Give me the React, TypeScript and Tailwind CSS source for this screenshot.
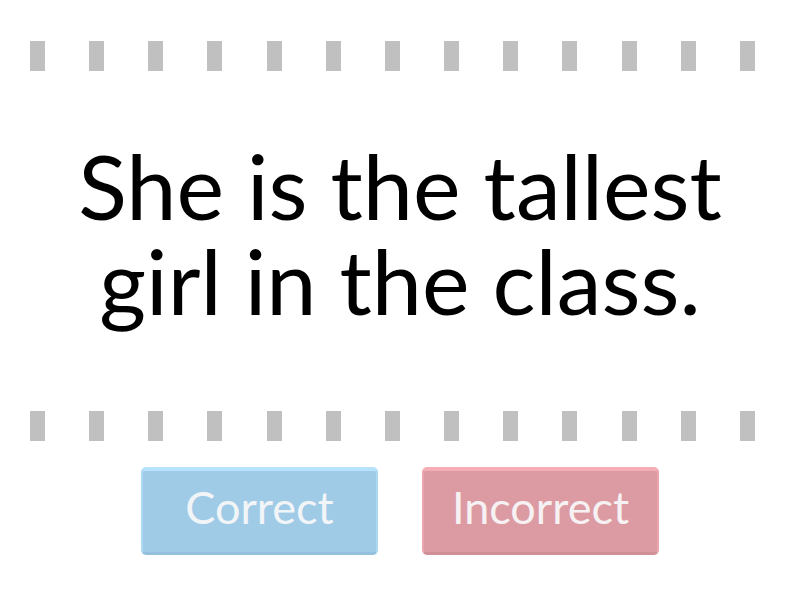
const ticks = Array.from({ length: 13 });

function TickRow() {
  return (
    <div className="ml-[30px] flex w-[725px] justify-between">
      {ticks.map((_, i) => (
        <div key={i} className="h-[30px] w-[15px] bg-[#c0c0c0]" />
      ))}
    </div>
  );
}

export default function App() {
  return (
    <div
      className="h-[600px] w-[800px] bg-white"
      style={{ fontFamily: "Lato, 'Open Sans', sans-serif" }}
    >
      <div className="pt-[41px]">
        <TickRow />
      </div>

      {/* sentence */}
      <div className="flex h-[340px] items-center justify-center pb-[16px] text-center">
        <p className="text-[90px] leading-[95px] text-black">
          She is the tallest
          <br />
          girl in the class.
        </p>
      </div>

      <TickRow />

      {/* answers */}
      <div className="mt-[26px] flex gap-[44px] pl-[141px]">
        <button className="flex h-[88px] w-[237px] items-center justify-center rounded-[5px] border-t-[4px] border-l-[2px] border-r-[2px] border-b-[3px] border-t-[#b6e2fb] border-l-[#acd8f2] border-r-[#acd8f2] border-b-[#93c0dd] bg-[#9fcbe7] pb-[8px] text-[45px] text-[#f2f5f7]">
          Correct
        </button>
        <button className="flex h-[88px] w-[237px] items-center justify-center rounded-[5px] border-t-[4px] border-l-[2px] border-r-[2px] border-b-[3px] border-t-[#f5adb6] border-l-[#eaa5ae] border-r-[#eaa5ae] border-b-[#d18f98] bg-[#dc9ba3] pb-[8px] text-[45px] text-[#f6f1f2]">
          Incorrect
        </button>
      </div>
    </div>
  );
}
